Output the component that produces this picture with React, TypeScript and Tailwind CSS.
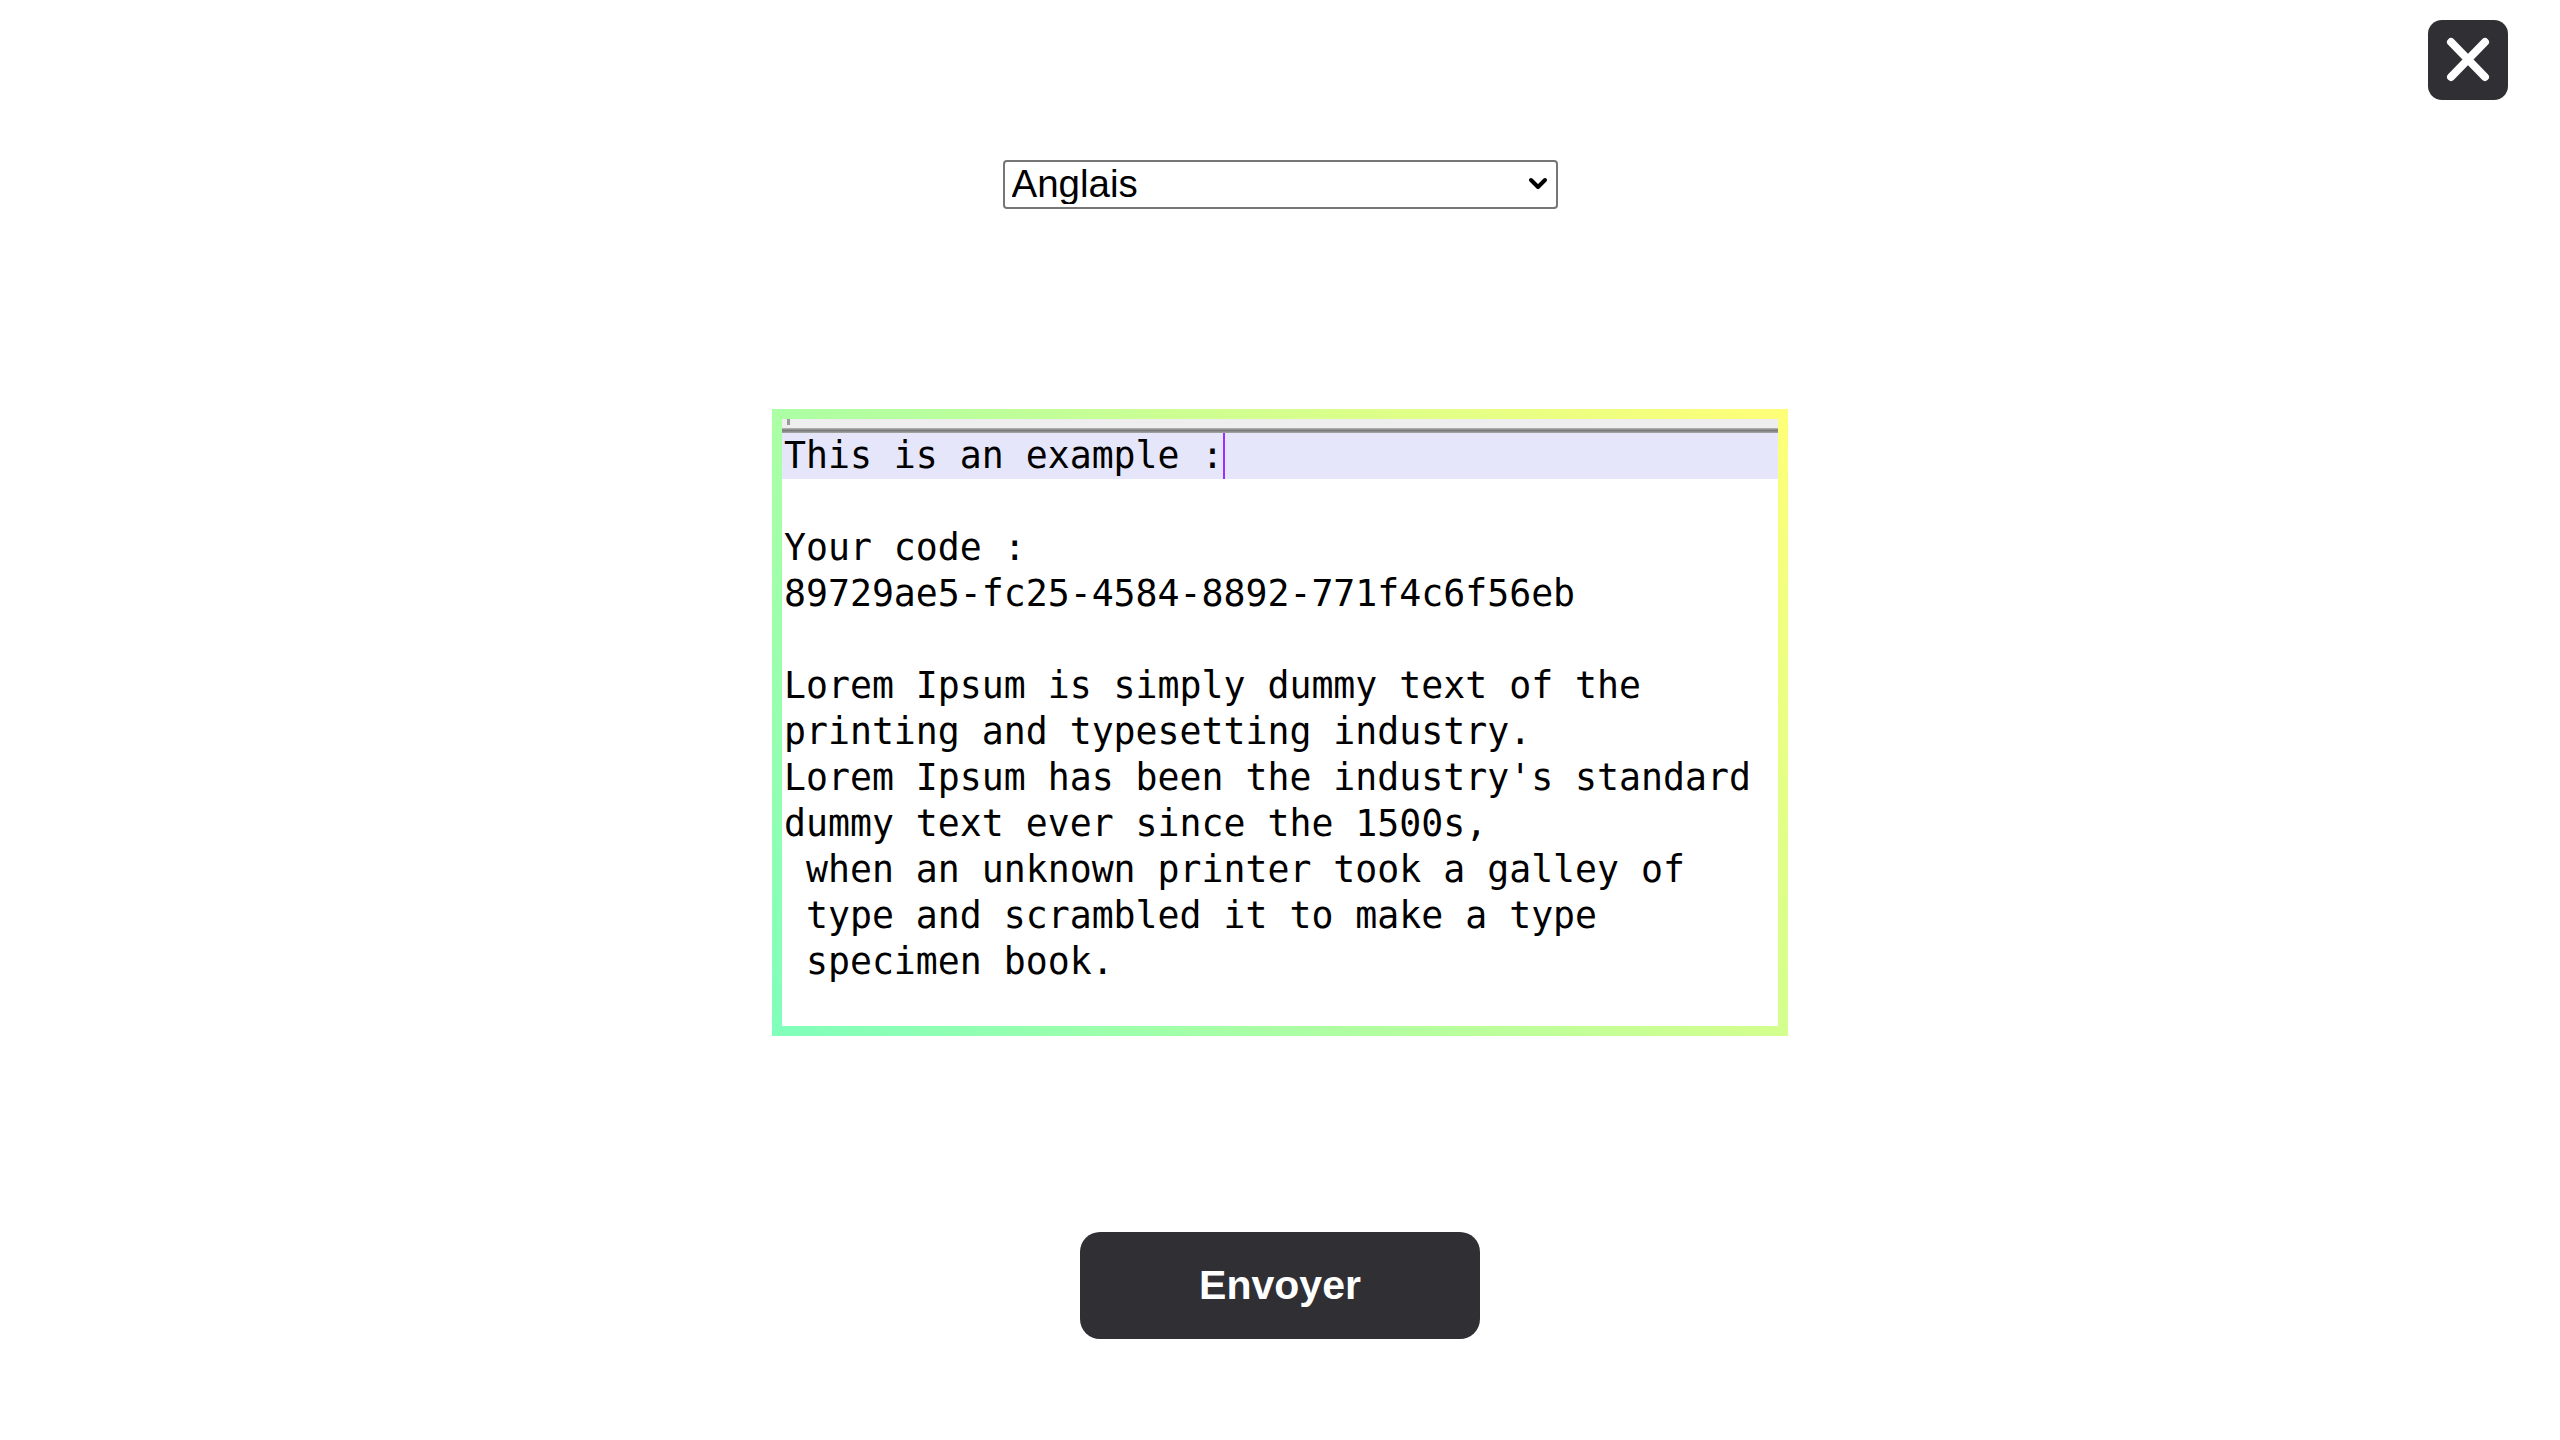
import React from "react";

const lines: string[] = [
  "Your code :",
  "89729ae5-fc25-4584-8892-771f4c6f56eb",
  "",
  "Lorem Ipsum is simply dummy text of the",
  "printing and typesetting industry.",
  "Lorem Ipsum has been the industry's standard",
  "dummy text ever since the 1500s,",
  " when an unknown printer took a galley of",
  " type and scrambled it to make a type",
  " specimen book.",
];

export default function App() {
  return (
    <div className="relative min-h-screen w-full bg-white">
      <button
        aria-label="Fermer"
        className="absolute right-[52px] top-[20px] flex h-[80px] w-[80px] items-center justify-center rounded-[14px] bg-[#2f2f34]"
      >
        <svg width="80" height="80" viewBox="0 0 80 80">
          <path d="M23 22 L57 57 M57 22 L23 57" stroke="#ffffff" strokeWidth="8" strokeLinecap="round" fill="none" />
        </svg>
      </button>

      <div className="flex flex-col items-center pt-[160px]">
        <div className="relative h-[49px] w-[555px]">
          <select
            defaultValue="en"
            className="h-full w-full appearance-none rounded-[4px] border-2 border-[#767676] bg-white pl-[7px] text-[38.5px] leading-none text-black outline-none"
            style={{ fontFamily: "Arial, 'Liberation Sans', sans-serif" }}
          >
            <option value="en">Anglais</option>
            <option value="fr">Français</option>
          </select>
          <svg
            className="pointer-events-none absolute right-[10px] top-[17px]"
            width="20"
            height="14"
            viewBox="0 0 20 14"
          >
            <path d="M3 3 L10 10 L17 3" stroke="#000" strokeWidth="4" fill="none" strokeLinecap="round" strokeLinejoin="round" />
          </svg>
        </div>

        <div className="mt-[200px] h-[627px] w-[1016px] bg-[linear-gradient(50deg,#80ffbb,#ffff77)] p-[10px]">
          <div className="flex h-full w-full flex-col bg-white">
            <div className="relative h-[9px] w-full bg-[#eeeeee]">
              <div className="absolute left-[5px] top-0 h-[6px] w-[3px] bg-[#9a9a9a]" />
            </div>
            <div className="h-[5px] w-full bg-linear-to-b from-[#b8b8b8] via-[#7a7a7a] to-[#a8a8a8]" />
            <div
              className="whitespace-pre text-[36.5px] leading-[46px] text-black"
              style={{ fontFamily: "'DejaVu Sans Mono', 'Liberation Mono', monospace" }}
            >
              <div className="flex h-[46px] items-stretch bg-[#e6e6fa] pl-[2px]">
                <span>This is an example :</span>
                <span className="ml-[-1px] w-[2px] bg-[#9a30ff]" />
              </div>
              <div className="h-[46px] pl-[2px]">{" "}</div>
              {lines.map((l, i) => (
                <div key={i} className="h-[46px] pl-[2px]">
                  {l === "" ? " " : l}
                </div>
              ))}
            </div>
          </div>
        </div>

        <button
          className="mt-[196px] flex h-[107px] w-[400px] items-center justify-center rounded-[20px] bg-[#2f2f34] text-[41px] font-bold text-white"
          style={{ fontFamily: "Arial, 'Liberation Sans', sans-serif" }}
        >
          Envoyer
        </button>
      </div>
    </div>
  );
}
